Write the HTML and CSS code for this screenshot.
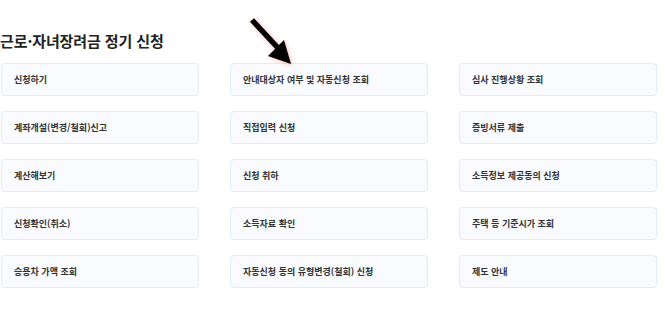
FILE: index.html
```html
<!DOCTYPE html>
<html lang="ko">
<head>
    <meta charset="UTF-8">
    <meta name="viewport" content="width=device-width, initial-scale=1.0">
    <title>근로·자녀장려금 정기 신청</title>
    <link rel="stylesheet" href="styles.css">
</head>
<body>
    <div id="wrap">
        <h2 class="title">근로·자녀장려금 정기 신청</h2>

        <ul class="menu">
            <li><a href="javascript:;">신청하기</a></li>
            <li><a href="javascript:;">안내대상자 여부 및 자동신청 조회</a></li>
            <li><a href="javascript:;">심사 진행상황 조회</a></li>
            <li><a href="javascript:;">계좌개설(변경/철회)신고</a></li>
            <li><a href="javascript:;">직접입력 신청</a></li>
            <li><a href="javascript:;">증빙서류 제출</a></li>
            <li><a href="javascript:;">계산해보기</a></li>
            <li><a href="javascript:;">신청 취하</a></li>
            <li><a href="javascript:;">소득정보 제공동의 신청</a></li>
            <li><a href="javascript:;">신청확인(취소)</a></li>
            <li><a href="javascript:;">소득자료 확인</a></li>
            <li><a href="javascript:;">주택 등 기준시가 조회</a></li>
            <li><a href="javascript:;">승용차 가액 조회</a></li>
            <li><a href="javascript:;">자동신청 동의 유형변경(철회) 신청</a></li>
            <li><a href="javascript:;">제도 안내</a></li>
        </ul>

        <!-- 안내 화살표 -->
        <svg class="arrow" width="52" height="56" viewBox="0 0 52 56">
            <line x1="7" y1="5" x2="33" y2="33" stroke="#000" stroke-width="5.5"/>
            <polygon points="46,49 23,41 39,25" fill="#000"/>
        </svg>
    </div>
</body>
</html>
```

FILE: styles.css
```css
* {
    margin: 0;
    padding: 0;
}

body {
    background: #fff;
    font-family: "Noto Sans CJK KR", "Noto Sans", sans-serif;
    color: #333;
}

#wrap {
    position: relative;
    width: 665px;
    padding-top: 29px;
}

.title {
    font-size: 15px;
    font-weight: 700;
    line-height: 24px;
    color: #222;
    letter-spacing: -0.1px;
}

.menu {
    list-style: none;
    display: grid;
    grid-template-columns: repeat(3, 198px);
    column-gap: 31px;
    row-gap: 15px;
    margin-top: 10px;
    margin-left: 1px;
}

.menu a {
    display: flex;
    align-items: center;
    height: 33px;
    box-sizing: border-box;
    padding-left: 12px;
    background: #f9fbff;
    border: 1px solid #e2eafb;
    border-radius: 4px;
    font-size: 9px;
    font-weight: 700;
    color: #333;
    text-decoration: none;
}

.arrow {
    position: absolute;
    left: 245px;
    top: 15px;
    filter: drop-shadow(1px 1px 2px rgba(255, 80, 80, 0.45));
}
```
